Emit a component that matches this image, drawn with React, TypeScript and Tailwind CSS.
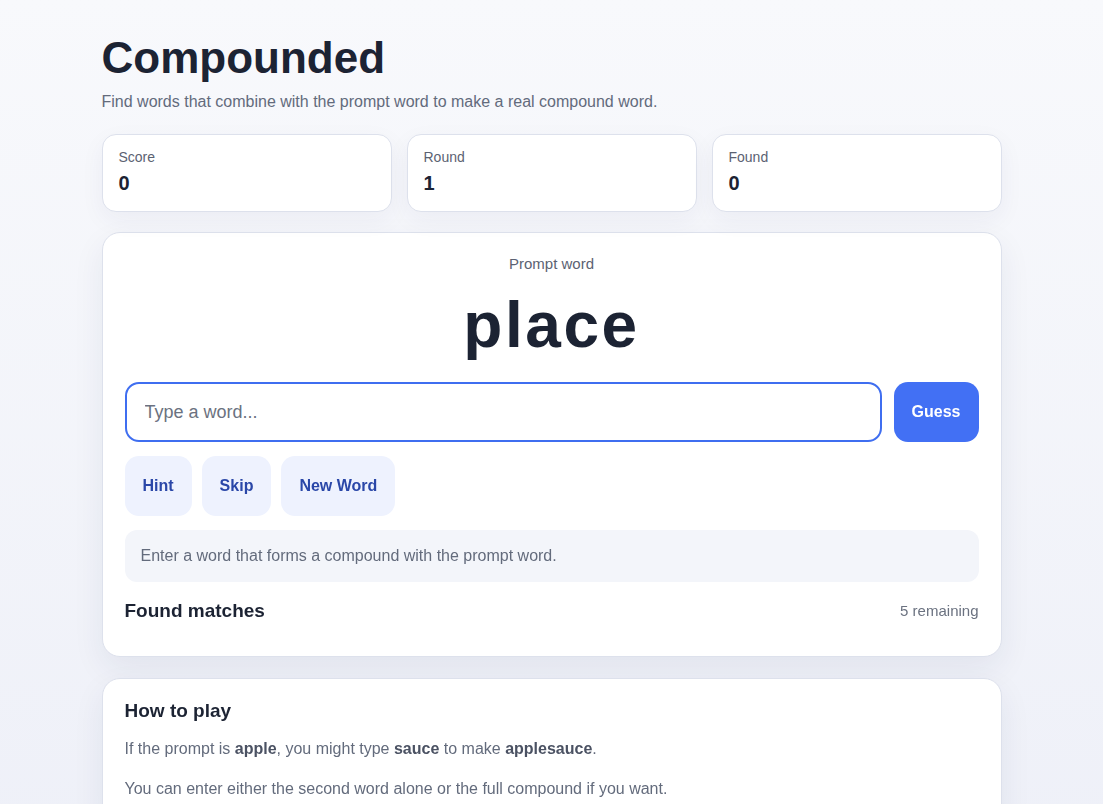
import { useState } from 'react';

/**
 * Compounded
 *
 * Word game: find words that join with the prompt word to make a compound.
 */

const FONT = { fontFamily: '"Liberation Sans", Arial, sans-serif' };

function StatCard({ label, value }: { label: string; value: string | number }) {
  return (
    <div className="bg-white rounded-[14px] border border-[#dde1ec] shadow-[0_8px_24px_rgba(30,40,90,0.05)] px-4 pt-[12px] h-[78px]">
      <div className="text-sm text-[#5b6272] leading-5">{label}</div>
      <div className="text-[20px] font-bold text-[#1c2333] leading-7 mt-[2px]">{value}</div>
    </div>
  );
}

export default function App() {
  const [guess, setGuess] = useState('');
  const [score] = useState(0);
  const [round] = useState(1);
  const [found] = useState(0);

  return (
    <div
      className="min-h-screen bg-gradient-to-b from-[#f8f9fc] to-[#eef0f8] text-[#1c2333]"
      style={FONT}
    >
      <div className="max-w-[900px] mx-auto pt-[30px] pb-10">
        {/* Header */}
        <h1 className="text-[44px] font-bold leading-[56px] text-[#1c2333]">Compounded</h1>
        <p className="text-base text-[#636b7c] mt-[4px] leading-6">
          Find words that combine with the prompt word to make a real compound word.
        </p>

        {/* Stats */}
        <div className="grid grid-cols-3 gap-[15px] mt-[20px]">
          <StatCard label="Score" value={score} />
          <StatCard label="Round" value={round} />
          <StatCard label="Found" value={found} />
        </div>

        {/* Game card */}
        <div className="mt-[20px] bg-white rounded-[18px] border border-[#dde1ec] shadow-[0_12px_32px_rgba(30,40,90,0.07)] px-[22px] pt-[21px] pb-[33px]">
          <div className="text-center text-[15px] text-[#5b6272] leading-5">Prompt word</div>
          <div className="text-center text-[64px] font-bold tracking-[0.04em] leading-[72px] mt-[15px] text-[#1c2333]">
            place
          </div>

          <div className="flex gap-[12px] mt-[21px]">
            <input
              autoFocus
              value={guess}
              onChange={(e) => setGuess(e.target.value)}
              placeholder="Type a word..."
              className="flex-1 h-[60px] rounded-[14px] border-2 border-[#3f6ef0] px-[18px] text-[18px] text-[#1c2333] placeholder:text-[#6b7280] outline-none"
              style={FONT}
            />
            <button className="w-[85px] h-[60px] rounded-[14px] bg-[#4270f4] text-white font-bold text-base">
              Guess
            </button>
          </div>

          <div className="flex gap-[10px] mt-[14px]">
            {['Hint', 'Skip', 'New Word'].map((label) => (
              <button
                key={label}
                className="h-[60px] px-[18px] rounded-[14px] bg-[#eef2fe] text-[#2a47a8] font-bold text-base"
              >
                {label}
              </button>
            ))}
          </div>

          {/* Message */}
          <div className="mt-[14px] h-[52px] rounded-[12px] bg-[#f3f5fa] px-4 flex items-center text-base text-[#636b7c]">
            Enter a word that forms a compound with the prompt word.
          </div>

          <div className="flex items-center justify-between mt-[17px]">
            <h2 className="text-[19px] font-bold text-[#1c2333] leading-6">Found matches</h2>
            <span className="text-[15px] text-[#6b7280]">5 remaining</span>
          </div>
        </div>

        {/* How to play */}
        <div className="mt-[21px] bg-white rounded-[18px] border border-[#dde1ec] shadow-[0_12px_32px_rgba(30,40,90,0.07)] px-[22px] pt-[20px] pb-[24px]">
          <h2 className="text-[19px] font-bold text-[#1c2333] leading-6">How to play</h2>
          <p className="text-base text-[#636b7c] mt-[14px] leading-6">
            If the prompt is <strong className="text-[#4b5263]">apple</strong>, you might type{' '}
            <strong className="text-[#4b5263]">sauce</strong> to make{' '}
            <strong className="text-[#4b5263]">applesauce</strong>.
          </p>
          <p className="text-base text-[#636b7c] mt-[16px] leading-6">
            You can enter either the second word alone or the full compound if you want.
          </p>
        </div>
      </div>
    </div>
  );
}
